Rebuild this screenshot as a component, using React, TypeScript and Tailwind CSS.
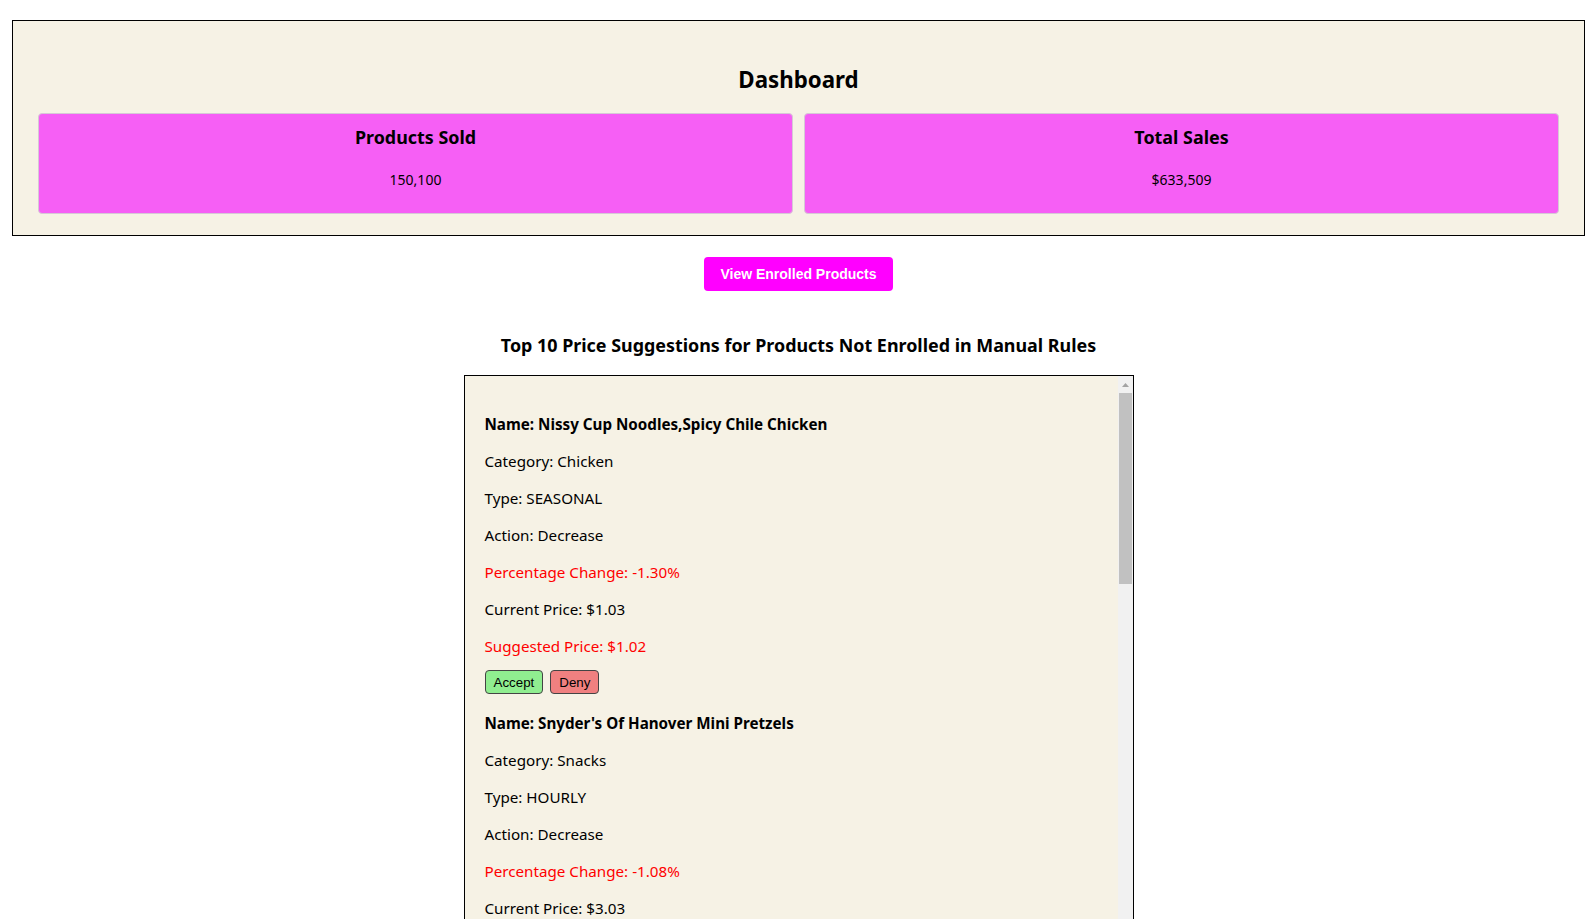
import { useState } from "react";

interface Suggestion {
    name: string;
    category: string;
    type: string;
    action: string;
    change: number;
    current: number;
    suggested: number;
}

const suggestions: Suggestion[] = [
    { name: "Nissy Cup Noodles,Spicy Chile Chicken", category: "Chicken", type: "SEASONAL", action: "Decrease", change: -1.3, current: 1.03, suggested: 1.02 },
    { name: "Snyder's Of Hanover Mini Pretzels", category: "Snacks", type: "HOURLY", action: "Decrease", change: -1.08, current: 3.03, suggested: 3.0 },
    { name: "Kellogg's Frosted Flakes Cereal", category: "Cereal", type: "DAILY", action: "Increase", change: 2.15, current: 4.19, suggested: 4.28 },
    { name: "Tropicana Pure Premium Orange Juice", category: "Beverages", type: "SEASONAL", action: "Decrease", change: -0.95, current: 5.49, suggested: 5.44 },
    { name: "Oreo Chocolate Sandwich Cookies", category: "Snacks", type: "HOURLY", action: "Increase", change: 1.12, current: 3.98, suggested: 4.02 },
    { name: "Campbell's Chicken Noodle Soup", category: "Soup", type: "DAILY", action: "Decrease", change: -1.45, current: 1.79, suggested: 1.76 },
    { name: "Barilla Spaghetti Pasta", category: "Pasta", type: "SEASONAL", action: "Increase", change: 0.87, current: 1.59, suggested: 1.6 },
    { name: "Heinz Tomato Ketchup", category: "Condiments", type: "HOURLY", action: "Decrease", change: -1.02, current: 2.99, suggested: 2.96 },
    { name: "Lay's Classic Potato Chips", category: "Snacks", type: "DAILY", action: "Increase", change: 1.64, current: 4.29, suggested: 4.36 },
    { name: "Quaker Old Fashioned Oats", category: "Cereal", type: "SEASONAL", action: "Decrease", change: -0.76, current: 3.49, suggested: 3.46 },
];

const font = "font-['Segoe_UI','Noto_Sans',sans-serif]";

function StatCard({ title, value }: { title: string; value: string }) {
    return (
        <div className="flex-1 h-[101px] bg-[#f65ff5] border border-[#d6c9d6] rounded-[4px] pt-[10px] text-center">
            <h3 className="text-[17.9px] leading-[26px] font-bold">{title}</h3>
            <p className="text-[14px] leading-[20px] mt-[20px]">{value}</p>
        </div>
    );
}

function Scrollbar() {
    return (
        <div className="w-[15px] shrink-0 bg-[#f1f1f1] flex flex-col">
            <div className="h-[17px] flex items-center justify-center">
                <svg width="7" height="4" viewBox="0 0 7 4">
                    <path d="M3.5 0 L7 4 L0 4 Z" fill="#a3a3a3" />
                </svg>
            </div>
            <div className="h-[191px] mx-[1px] bg-[#c1c1c1]" />
        </div>
    );
}

export default function App() {
    const [items, setItems] = useState(suggestions);

    const remove = (i: number) => setItems(items.filter((_, idx) => idx !== i));

    return (
        <div className={`${font} text-black bg-white h-[919px] overflow-hidden pt-[20px]`}>
            <div className="ml-[12px] mr-[3px]">
                <div className="border border-black bg-[#f6f2e5] px-[25px] pt-[43px] pb-[21px]">
                    <h2 className="text-center text-[22.3px] leading-[32px] font-bold mb-[17px]">Dashboard</h2>
                    <div className="flex gap-[11px]">
                        <StatCard title="Products Sold" value="150,100" />
                        <StatCard title="Total Sales" value="$633,509" />
                    </div>
                </div>

                <div className="flex justify-center mt-[21px]">
                    <button className="h-[34px] w-[189px] rounded-[4px] bg-[#ff00ff] text-white font-bold text-[14px] font-['Liberation_Sans',Arial,sans-serif] cursor-pointer">
                        View Enrolled Products
                    </button>
                </div>

                <h3 className="text-center text-[17.9px] leading-[26px] font-bold mt-[41px] mb-[17px]">
                    Top 10 Price Suggestions for Products Not Enrolled in Manual Rules
                </h3>

                <div className="w-[670px] h-[768px] mx-auto border border-black bg-[#f6f2e5] flex">
                    <div className="flex-1 overflow-y-auto [scrollbar-width:none] px-[20px] pt-[22px] pb-[20px] text-[15.2px] leading-[21px]">
                        {items.map((s, i) => (
                            <div key={s.name}>
                                <p className="my-4 font-bold">Name: {s.name}</p>
                                <p className="my-4">Category: {s.category}</p>
                                <p className="my-4">Type: {s.type}</p>
                                <p className="my-4">Action: {s.action}</p>
                                <p className="my-4 text-[#ff0000]">Percentage Change: {s.change.toFixed(2)}%</p>
                                <p className="my-4">Current Price: ${s.current.toFixed(2)}</p>
                                <p className="my-4 text-[#ff0000]">Suggested Price: ${s.suggested.toFixed(2)}</p>
                                <div className="-mt-[3px] pb-[3px] flex gap-[7px] font-['Liberation_Sans',Arial,sans-serif] text-[13.33px]">
                                    <button
                                        onClick={() => remove(i)}
                                        className="h-[24px] px-[8px] bg-[#90ee90] border border-[#444] rounded-[4px] cursor-pointer"
                                    >
                                        Accept
                                    </button>
                                    <button
                                        onClick={() => remove(i)}
                                        className="h-[24px] px-[8px] bg-[#f08080] border border-[#444] rounded-[4px] cursor-pointer"
                                    >
                                        Deny
                                    </button>
                                </div>
                            </div>
                        ))}
                    </div>
                    <Scrollbar />
                </div>
            </div>
        </div>
    );
}
